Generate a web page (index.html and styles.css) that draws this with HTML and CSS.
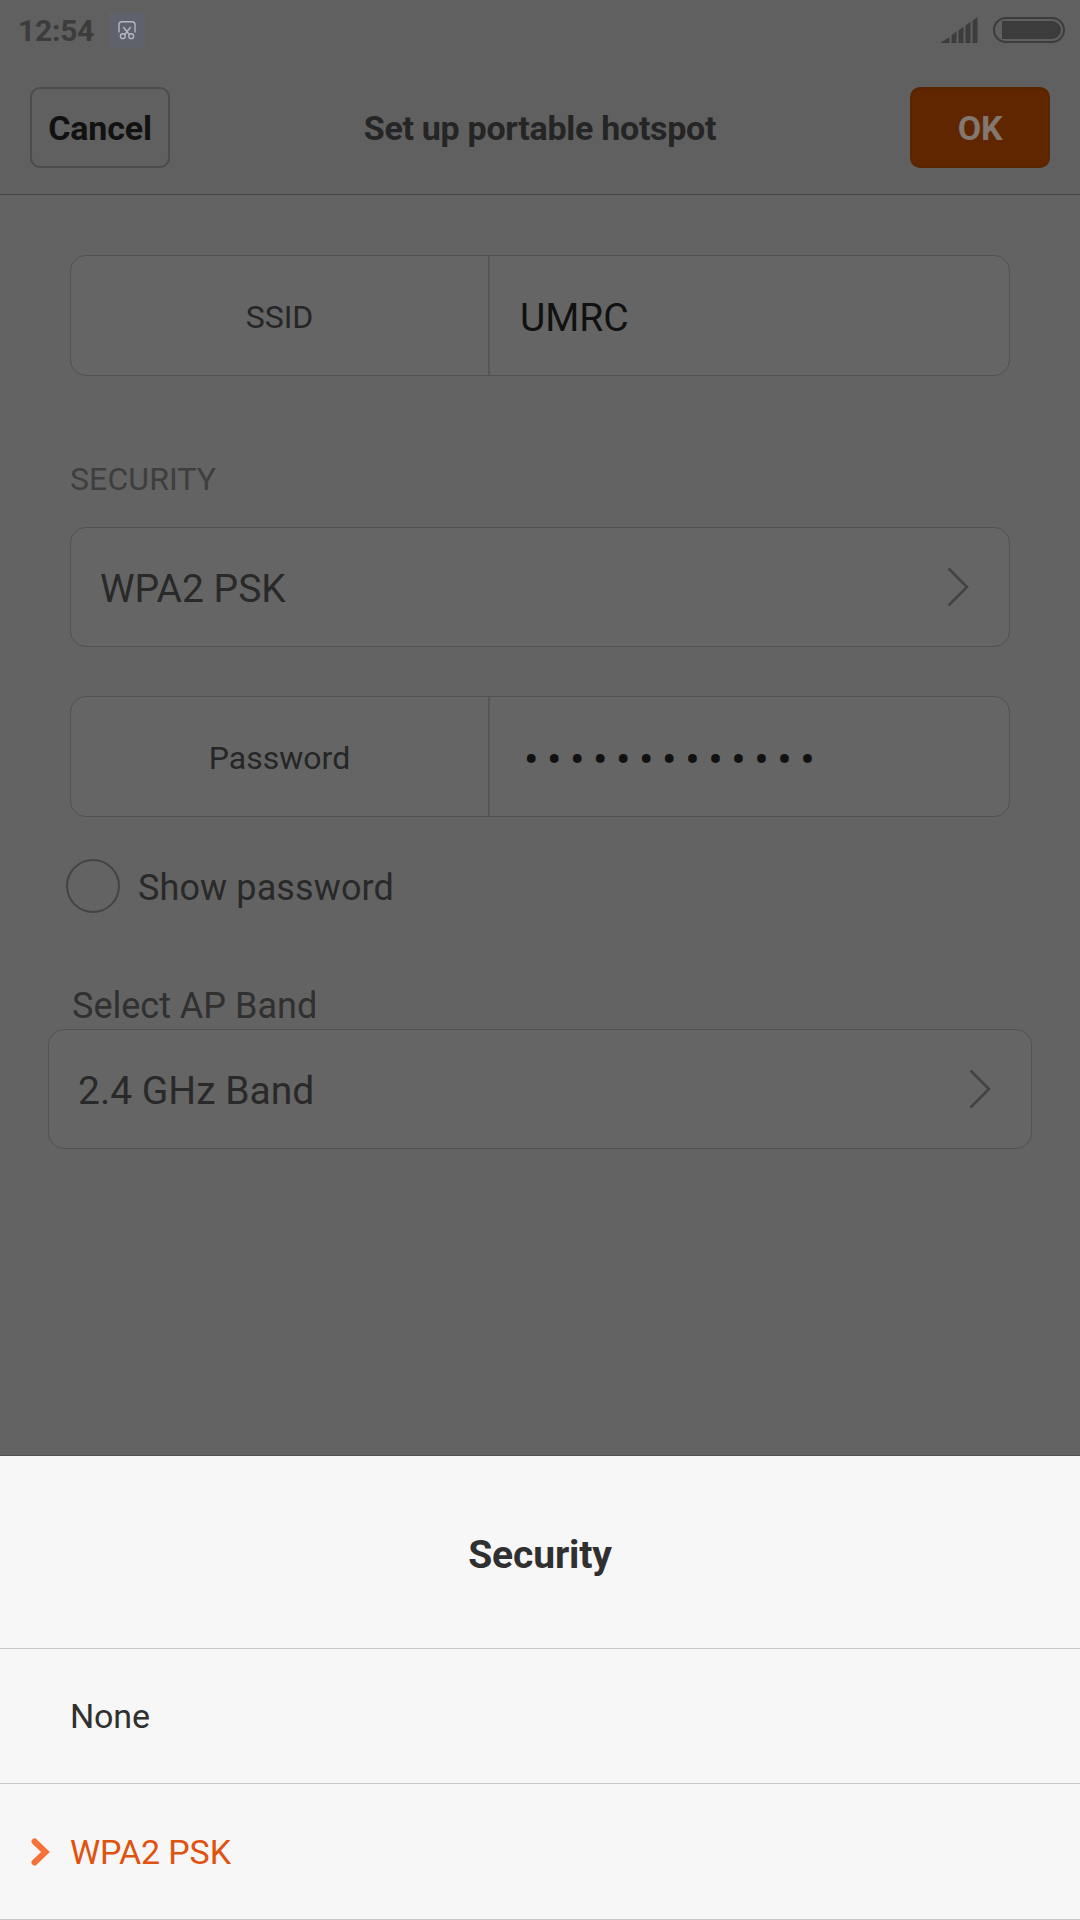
FILE: index.html
```html
<!DOCTYPE html>
<html lang="en">
<head>
<meta charset="utf-8">
<title>Set up portable hotspot</title>
<link rel="stylesheet" href="styles.css">
</head>
<body>
<div class="screen">
  <div class="status-bar">
    <span class="clock">12:54</span>
    <span class="capture">
      <svg width="20" height="20" viewBox="0 0 20 20" fill="none" stroke="#b4b8c2" stroke-width="1.4">
        <path d="M2 12.5V4.5A3 3 0 0 1 5 1.8H15A3 3 0 0 1 18 4.5V12.5M6.3 7L12.4 14.8M13.7 7L7.6 14.8"/>
        <circle cx="5.8" cy="16.2" r="2.4"/>
        <circle cx="14.2" cy="16.2" r="2.4"/>
      </svg>
    </span>
    <svg class="signal" width="38" height="26" viewBox="0 0 38 26" fill="#3c3c3c">
      <path d="M0 26L9.500 20V26ZM11.500 26V18.200L16.500 14.600V26ZM18.500 26V13.400L23.500 9.800V26ZM25.500 26V8.600L30.500 5V26ZM32.500 26V3.800L37.500 0V26Z"/>
    </svg>
    <svg class="battery" width="72" height="26" viewBox="0 0 72 26">
      <rect x="1" y="1" width="70" height="24" rx="12" fill="none" stroke="#3c3c3c" stroke-width="2"/>
      <path d="M9 4H59A9 9 0 0 1 59 22H9Z" fill="#3c3c3c"/>
    </svg>
  </div>
  <header class="action-bar">
    <button class="button">Cancel</button>
    <h1 class="title">Set up portable hotspot</h1>
    <button class="button button-primary">OK</button>
  </header>
  <main class="form">
    <div class="card ssid">
      <div class="label">SSID</div>
      <div class="value input">UMRC</div>
    </div>
    <div class="section">SECURITY</div>
    <div class="card picker">
      <span class="value">WPA2 PSK</span>
      <svg class="arrow" width="22" height="40" viewBox="0 0 22 40"><path d="M1.500 1.500L20 20L1.500 38.500"/></svg>
    </div>
    <div class="card password">
      <div class="label">Password</div>
      <div class="value input dots">•••••••••••••</div>
    </div>
    <div class="check-row">
      <span class="check"></span>
      <span class="check-text">Show password</span>
    </div>
    <div class="band-title">Select AP Band</div>
    <div class="card picker band">
      <span class="value">2.4 GHz Band</span>
      <svg class="arrow" width="22" height="40" viewBox="0 0 22 40"><path d="M1.500 1.500L20 20L1.500 38.500"/></svg>
    </div>
  </main>
  <section class="sheet">
    <h2 class="sheet-title">Security</h2>
    <div class="option">None</div>
    <div class="option selected">
      <svg class="marker" width="20" height="28" viewBox="0 0 20 28"><path d="M3.500 3.500L14.500 14L3.500 24.500"/></svg>
      <span>WPA2 PSK</span>
    </div>
  </section>
</div>
</body>
</html>
```
FILE: styles.css
```css
* { box-sizing: border-box; }
body { margin: 0; font-family: Roboto, sans-serif; }
h1, h2 { margin: 0; }

.screen {
  width: 1080px;
  height: 1920px;
  display: flex;
  flex-direction: column;
  background: #636363;
  overflow: hidden;
}

.status-bar {
  height: 60px;
  padding: 0 15px 0 18px;
  display: flex;
  align-items: center;
  background: #606060;
}
.clock { width: 76px; font-size: 30px; letter-spacing: -0.25px; font-weight: 700; line-height: 36px; color: #3c3c3c; padding-top: 1px; }
.capture {
  width: 36px;
  height: 36px;
  margin-left: 15px;
  display: flex;
  align-items: center;
  justify-content: center;
  background: #5f616b;
}
.signal { margin-left: auto; margin-right: 15px; }

.action-bar {
  height: 135px;
  padding: 27px 30px 0;
  display: flex;
  justify-content: space-between;
  align-items: flex-start;
  background: #606060;
  border-bottom: 1px solid #444;
}
.button {
  width: 140px;
  height: 81px;
  padding: 0;
  border: 2px solid #4c4c4c;
  border-radius: 10px;
  background: transparent;
  color: #111;
  font: 700 34px Roboto, sans-serif;
  letter-spacing: -0.2px;
}
.button-primary { background: #602600; border-color: #582501; color: #827870; }
.title { font-size: 34px; line-height: 83px; font-weight: 700; letter-spacing: -0.29px; color: #252525; }

.form { flex: 1; padding: 60px 70px 0; }
.card {
  height: 121px;
  display: flex;
  align-items: center;
  border: 1px solid #525252;
  border-radius: 16px;
  background: #656565;
}
.label {
  width: 419px;
  height: 100%;
  padding-top: 3px;
  display: flex;
  align-items: center;
  justify-content: center;
  border-right: 2px solid #565656;
  font-size: 32px;
  color: #262626;
}
.value { padding-top: 4px; font-size: 39px; line-height: 46px; color: #292929; }
.input { padding-left: 30px; color: #111; }
.dots { padding-left: 34px; font-size: 43px; letter-spacing: 8.51px; }
.section { margin-top: 83px; font-size: 32px; line-height: 40px; letter-spacing: 0.1px; color: #3e3e3e; }
.picker { height: 120px; margin-top: 28px; padding: 0 40px 0 29px; justify-content: space-between; }
.picker .value { padding-top: 3px; }
.arrow { margin-bottom: 1px; }
.arrow path { fill: none; stroke: #434343; stroke-width: 2.600; }
.password { margin-top: 49px; }
.check-row { margin: 42px 0 0 -4px; display: flex; align-items: center; gap: 18px; }
.check { width: 54px; height: 54px; border: 2px solid #434343; border-radius: 50%; }
.check-text { padding-top: 3px; font-size: 36px; line-height: 44px; letter-spacing: 0.12px; color: #292929; }
.band-title { margin: 71px 0 0 2px; font-size: 36px; line-height: 44px; color: #303030; }
.band { margin: 1px -22px 0; }

.sheet { height: 465px; border-top: 1px solid #565252; background: #f7f7f7; color: #303030; }
.sheet-title {
  height: 193px;
  padding-top: 6px;
  border-bottom: 1px solid #c6c6c6;
  text-align: center;
  font-size: 39px;
  line-height: 187px;
  letter-spacing: -0.15px;
}
.option {
  height: 135px;
  padding-left: 70px;
  display: flex;
  align-items: center;
  border-bottom: 1px solid #c6c6c6;
  font-size: 34px;
  letter-spacing: -0.15px;
}
.selected { height: 136px; padding-left: 31px; gap: 19px; color: #e0520f; }
.marker path { fill: none; stroke: #f77038; stroke-width: 6; stroke-linecap: round; }
```
